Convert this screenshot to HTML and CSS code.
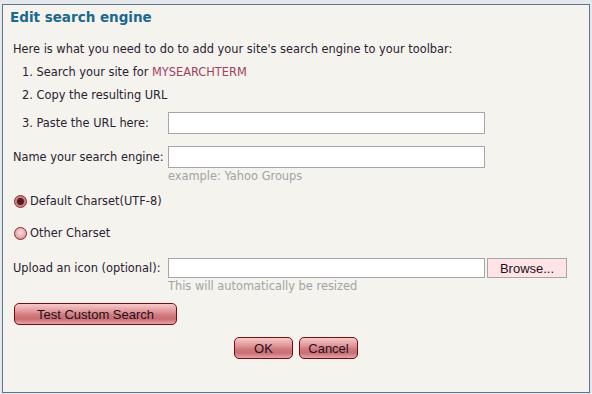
FILE: index.html
```
<!DOCTYPE html>
<html lang="en">
<head>
  <meta charset="UTF-8" />
  <title>Edit search engine</title>
  <link rel="stylesheet" href="styles.css">
</head>
<body>
  <div class="panel">
    <h1 class="title">Edit search engine</h1>

    <div class="row intro">Here is what you need to do to add your site's search engine to your toolbar:</div>
    <div class="row step">1. Search your site for <span class="term">MYSEARCHTERM</span></div>
    <div class="row step">2. Copy the resulting URL</div>

    <div class="field step3">
      <label class="label step">3. Paste the URL here:</label>
      <input class="text" type="text">
    </div>

    <div class="field name">
      <label class="label">Name your search engine:</label>
      <input class="text" type="text" autofocus>
    </div>
    <div class="hint">example: Yahoo Groups</div>

    <label class="radio first"><input type="radio" name="charset" checked> Default Charset(UTF-8)</label>
    <label class="radio second"><input type="radio" name="charset"> Other Charset</label>

    <div class="field upload">
      <label class="label">Upload an icon (optional):</label>
      <input class="text small" type="text">
      <button class="browse">Browse...</button>
    </div>
    <div class="hint">This will automatically be resized</div>

    <div class="test-row">
      <button class="btn test">Test Custom Search</button>
    </div>

    <div class="actions">
      <button class="btn small-btn">OK</button>
      <button class="btn small-btn">Cancel</button>
    </div>
  </div>
</body>
</html>
```
FILE: styles.css
```
* {
  box-sizing: border-box;
}

html, body {
  height: 100%;
  margin: 0;
}

body {
  background: #e5e8ec;
  padding: 4px 2px 1px 2px;
  font-family: "DejaVu Sans", Verdana, sans-serif;
  font-size: 11.4px;
  color: #2a2230;
}

.panel {
  height: 100%;
  background: #f4f3ee;
  border: 1px solid #5d7586;
  padding: 0 10px;
}

.title {
  margin: 0 0 7px -3px;
  height: 26px;
  line-height: 25px;
  font-size: 13.5px;
  font-weight: bold;
  color: #1b6890;
}

.row {
  height: 23px;
  line-height: 23px;
}

.step {
  padding-left: 9px;
}

.term {
  color: #a3405e;
}

.field {
  display: flex;
  align-items: center;
  height: 22px;
}

.field .label {
  width: 155px;
  flex: none;
}

.step3 { margin-top: 5px; }
.name { margin-top: 12px; }
.upload { margin-top: 14px; height: 20px; }

.text {
  width: 317px;
  height: 22px;
  border: 1px solid #a6a6a6;
  background: #fff;
  margin: 0;
  padding: 0 2px;
  font: inherit;
  outline: none;
}

.text.small {
  height: 20px;
}

.browse {
  margin-left: 2px;
  width: 80px;
  height: 20px;
  background: #ffe4e6;
  border: 1px solid #a6a6a6;
  font-family: "Liberation Sans", Arial, sans-serif;
  font-size: 13px;
  color: #1a1020;
  padding: 0;
}

.hint {
  margin-left: 155px;
  height: 16px;
  line-height: 16px;
  color: #a3a3a3;
}

.radio {
  display: flex;
  align-items: center;
  height: 22px;
  margin-left: 1px;
}

.radio.first { margin-top: 6px; }
.radio.second { margin-top: 10px; }

.radio input {
  appearance: none;
  width: 13px;
  height: 13px;
  margin: 0 3px 0 0;
  border-radius: 50%;
  border: 1px solid #8b2828;
  background: radial-gradient(circle at 50% 40%, #fbe0e2 0%, #e8a8ae 60%, #c8787e 100%);
}

.radio input:checked {
  background: radial-gradient(circle, #5a1a1e 0 3px, #c07a80 4px, #e8b0b4 100%);
}

.test-row {
  margin-top: 9px;
  padding-left: 1px;
}

.btn {
  height: 22px;
  border: 1px solid #7a0c10;
  border-radius: 5px;
  background: linear-gradient(#f6caca 0%, #e39a9c 35%, #d17a7e 55%, #c96e72 75%, #e4a4a6 100%);
  font-family: "Liberation Sans", Arial, sans-serif;
  font-size: 13px;
  color: #1a1020;
  padding: 0;
}

.test {
  width: 163px;
}

.actions {
  margin-top: 12px;
  display: flex;
  justify-content: center;
  gap: 6px;
}

.small-btn {
  width: 59px;
}
```
